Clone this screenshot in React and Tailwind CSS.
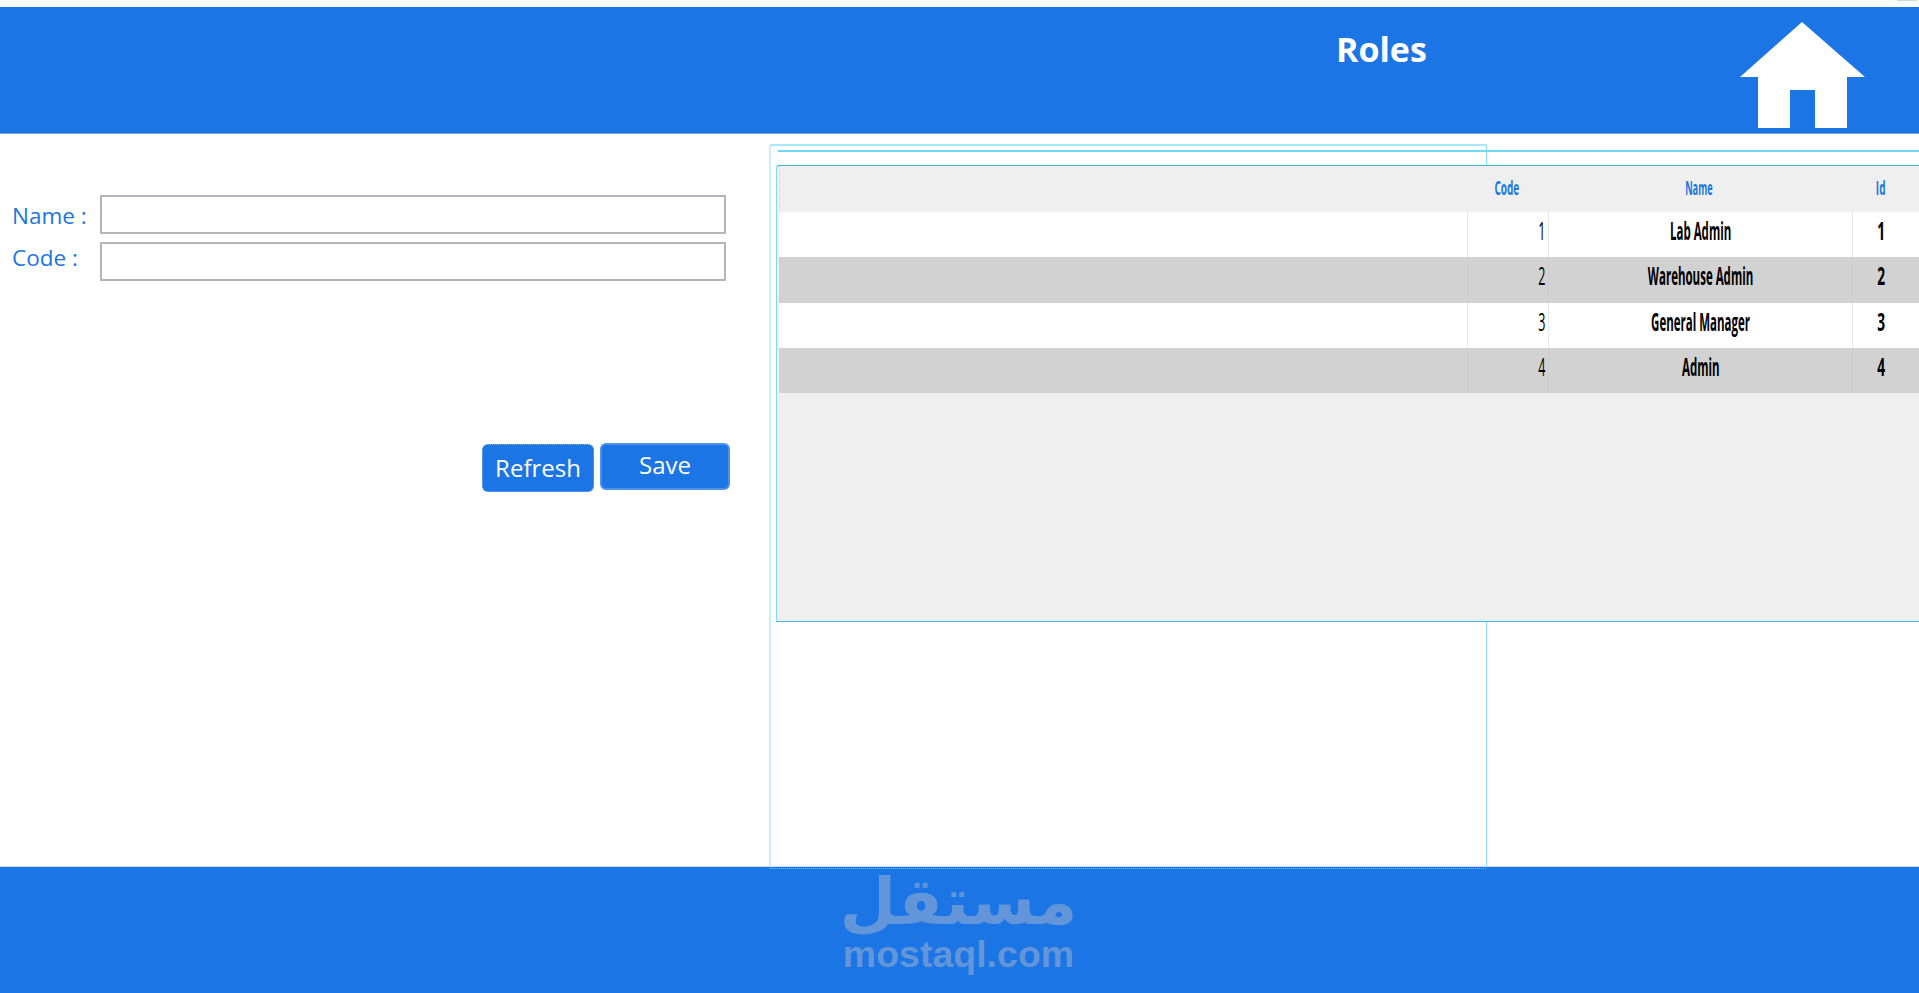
const roles = [
  { id: 1, name: "Lab Admin", code: 1 },
  { id: 2, name: "Warehouse Admin", code: 2 },
  { id: 3, name: "General Manager", code: 3 },
  { id: 4, name: "Admin", code: 4 },
];

function HomeIcon() {
  return (
    <svg width="125" height="106" viewBox="0 0 125 106" className="mt-[15px] mr-[54px] shrink-0">
      <path
        d="M62 0 L125 55 L107 55 L107 106 L75 106 L75 68 L50 68 L50 106 L18 106 L18 55 L0 55 Z"
        fill="#ffffff"
      />
    </svg>
  );
}

function App() {
  return (
    <div className="flex h-[993px] w-[1919px] flex-col overflow-hidden bg-white font-['Open_Sans',sans-serif]">
      {/* TOP STRIP */}
      <div className="flex h-[7px] shrink-0 justify-end">
        <div className="mr-[2px] h-px w-[20px] bg-gray-300" />
      </div>

      {/* HEADER */}
      <header className="flex h-[127px] shrink-0 items-start justify-between border-b border-[#6ea6ee] bg-[#1b75e4]">
        <h1 className="mt-[19px] ml-[1336px] text-[34px] leading-[46px] font-bold text-white">Roles</h1>
        <HomeIcon />
      </header>

      {/* MAIN */}
      <main className="flex h-[732px] shrink-0">
        {/* FORM */}
        <section className="w-[769px] shrink-0 pt-[61px]">
          <div className="flex flex-col gap-[8px]">
            <div className="flex items-center pl-[12px]">
              <label className="mt-[2px] w-[88px] text-[22.5px] text-[#1b75e4]">Name :</label>
              <input className="h-[39px] w-[626px] border-2 border-[#b4b4ba] bg-white" />
            </div>
            <div className="flex items-start pl-[12px]">
              <label className="w-[88px] text-[22.5px] leading-[32px] text-[#1b75e4]">Code :</label>
              <input className="h-[39px] w-[626px] border-2 border-[#b4b4ba] bg-white" />
            </div>
          </div>

          <div className="mt-[162px] flex items-start gap-[6px] pl-[482px]">
            <button className="mt-px h-[48px] w-[112px] rounded-[6px] border border-dotted border-[#7fb0f0] bg-[#1b75e4] text-[24px] text-white">
              Refresh
            </button>
            <button className="h-[47px] w-[130px] rounded-[6px] border-2 border-[#4f90e8] bg-[#1b75e4] pb-[4px] text-[24px] text-white">
              Save
            </button>
          </div>
        </section>

        {/* GRID FRAME */}
        <section className="mt-[10px] h-[722px] w-[718px] shrink-0 rounded-tl-[3px] border-t-2 border-r border-l-2 border-t-[#a8e6fa] border-r-[#8cdcf8] border-l-[#c9effb] pt-[4px] pl-[6px]">
          <div className="ml-[1px] h-[2px] w-[1142px] bg-[#6fd8f8]" />

          <div className="mt-[13px] ml-[-1px] h-[457px] w-[1145px] rounded-tl-[3px] border-t border-b border-l border-t-[#3fb6e4] border-b-[#3fb6e4] border-l-[#7fd8f6] bg-[#efefef] pl-[2px]">
            <div className="grid h-[46px] grid-cols-[689px_81px_304px_70px] items-start border-l border-dotted border-[#d4d4d4] text-[20px] leading-[44px] font-bold text-[#1b75e4]">
              <div />
              <div className="pr-[5px] text-center">
                <span className="inline-block scale-x-[0.5]">Code</span>
              </div>
              <div className="pr-[6px] text-center">
                <span className="inline-block scale-x-[0.46]">Name</span>
              </div>
              <div className="pr-[16px] text-center">
                <span className="inline-block scale-x-[0.5]">Id</span>
              </div>
            </div>

            {roles.map((r) => {
              const line = r.id % 2 === 0 ? "border-[#cccccc]" : "border-[#e8e8e8]";
              return (
                <div
                  key={r.id}
                  className={`grid h-[45.25px] grid-cols-[689px_81px_304px_70px] text-[25px] leading-[37px] text-black ${
                    r.id % 2 === 0 ? "bg-[#d2d2d2]" : "bg-white"
                  }`}
                >
                  <div className={`border-r ${line}`} />
                  <div className={`border-r ${line} pr-[3px] text-right`}>
                    <span className="inline-block origin-right scale-x-[0.5]">{r.code}</span>
                  </div>
                  <div className={`border-r ${line} text-center font-bold`}>
                    <span className="inline-block scale-x-[0.46] whitespace-nowrap">{r.name}</span>
                  </div>
                  <div className="pr-[14px] text-center font-bold">
                    <span className="inline-block scale-x-[0.55]">{r.id}</span>
                  </div>
                </div>
              );
            })}
          </div>
        </section>
      </main>

      {/* FOOTER */}
      <footer className="h-[127px] shrink-0 border-t border-[#cfdcf5] bg-[#1b75e4]">
        <div className="mt-px ml-[770px] w-[716px] border-t border-dotted border-[#35d3f5]" />
        <div className="ml-[844px] flex w-[229px] flex-col items-center text-[#6295d9]">
          <div dir="rtl" className="h-[68px] font-['DejaVu_Sans',sans-serif] text-[65px] leading-[66px] font-bold whitespace-nowrap">
            مستقل
          </div>
          <div className="font-['Liberation_Sans',sans-serif] text-[37.5px] leading-[34px] font-bold whitespace-nowrap">
            mostaql.com
          </div>
        </div>
      </footer>
    </div>
  );
}

export default App;
